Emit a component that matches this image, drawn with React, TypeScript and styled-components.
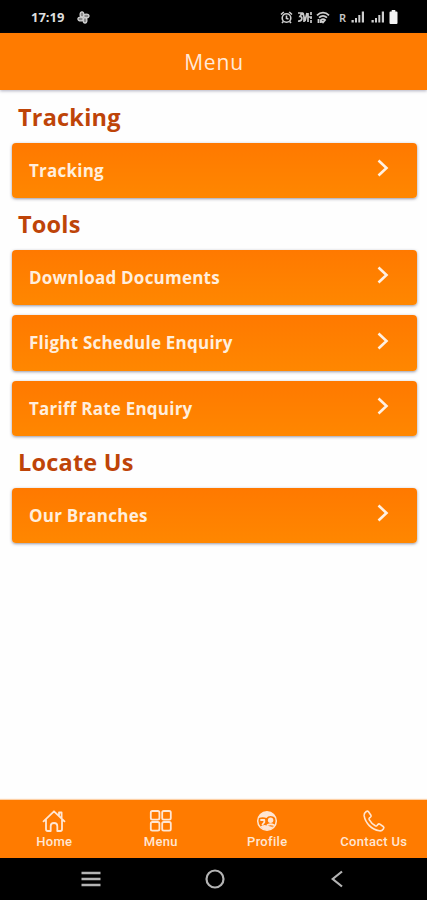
import React from "react";
import styled, { createGlobalStyle } from "styled-components";

const GlobalStyle = createGlobalStyle`
  * { box-sizing: border-box; }
  body { margin: 0; background: #fefefe; }
`;

const Screen = styled.div`
  display: flex;
  flex-direction: column;
  width: 100%;
  height: 900px;
  overflow: hidden;
  background: #fefefe;
  font-family: "Open Sans", sans-serif;
`;

const StatusBar = styled.div`
  display: flex;
  justify-content: space-between;
  align-items: center;
  height: 33px;
  padding: 1px 29px 0 31px;
  background: #000;
  color: #dedede;
`;

const StatusGroup = styled.div<{ $gap: number }>`
  display: flex;
  align-items: center;
  gap: ${(p) => p.$gap}px;
`;

const Clock = styled.span`
  font: 700 13px/16px "Noto Sans", sans-serif;
  letter-spacing: 0;
`;

const TopBar = styled.header`
  display: flex;
  align-items: center;
  justify-content: center;
  height: 57px;
  flex: none;
  padding-left: 1px;
  background: #ff7b00;
  box-shadow: 0 1px 3px rgba(60, 60, 100, 0.4);
  z-index: 1;
`;

const Title = styled.h1`
  margin: 0;
  color: #ffeadb;
  font-size: 21px;
  font-weight: 500;
  letter-spacing: 0.8px;
`;

const Content = styled.main`
  flex: 1;
  padding: 1px 10px 0 11.5px;
`;

const Heading = styled.h2`
  margin: 0;
  height: 51.5px;
  padding-left: 6.5px;
  color: #be4408;
  font-size: 23.5px;
  font-weight: 700;
  line-height: 52px;
  letter-spacing: 0.2px;
`;

const CardList = styled.div`
  display: flex;
  flex-direction: column;
  gap: 10px;
`;

const Card = styled.div`
  display: flex;
  align-items: center;
  justify-content: space-between;
  height: 55.5px;
  padding: 0 28px 0 17.5px;
  border-radius: 4px;
  background: linear-gradient(#ff7900, #ff8700);
  box-shadow: 0 1px 3px rgba(50, 50, 80, 0.5);
  svg { margin-top: -4px; }
`;

const CardLabel = styled.span`
  color: #ffeedd;
  font-size: 17px;
  font-weight: 700;
  letter-spacing: 0.23px;
`;

const TabBar = styled.nav`
  display: grid;
  grid-template-columns: repeat(4, 1fr);
  height: 58px;
  flex: none;
  padding-left: 1px;
  background: #ff7b00;
  box-shadow: 0 -1px 1px rgba(255, 123, 0, 0.35);
`;

const Tab = styled.div`
  display: flex;
  flex-direction: column;
  align-items: center;
  padding-top: 9px;
  color: #ffe6d3;
`;

const TabLabel = styled.span`
  font: 500 13px/15px Roboto, sans-serif;
  letter-spacing: 0.3px;
  margin-top: 1px;
  white-space: nowrap;
`;

const SystemBar = styled.div`
  display: flex;
  align-items: center;
  justify-content: space-between;
  height: 42px;
  flex: none;
  padding: 0 84px 0 81px;
  background: #000;
`;

const Chevron = () => (
  <svg width="12" height="18" viewBox="0 0 12 18" fill="none" stroke="#fff0e2" strokeWidth="2.6">
    <path d="M1.500 1.500 9.500 9l-8 7.500" />
  </svg>
);

const FanIcon = () => (
  <svg width="13" height="13" viewBox="0 0 13 13" fill="#888" stroke="#d0d0d0" strokeWidth="1.300">
    <ellipse cx="5" cy="3.500" rx="1.900" ry="2.700" />
    <ellipse cx="9.300" cy="5" rx="2.700" ry="1.900" />
    <ellipse cx="8" cy="9.300" rx="1.900" ry="2.700" />
    <ellipse cx="3.600" cy="8" rx="2.700" ry="1.900" />
  </svg>
);

const AlarmIcon = () => (
  <svg width="13" height="13" viewBox="0 0 13 13" fill="none" stroke="#cfcfcf" strokeWidth="1.600">
    <circle cx="6.500" cy="7" r="4.300" />
    <path d="M1 3.500 3.800 1M12 3.500 9.200 1M6.500 4.500v3l2 .6M3.300 10.500 2 12M9.700 10.500 11 12" />
  </svg>
);

const NetworkIcon = () => (
  <svg width="16" height="13" viewBox="0 0 16 13" fill="none" stroke="#c8c8c8" strokeWidth="1.700">
    <path d="M1 2h4L3 5.500c3 0 2.500 5 -2 4.500M6 2l2 8 2-8M7 6v5M11 2v9M14 1v3M14 6v2M14 9v3M11 6h4" />
  </svg>
);

const WifiIcon = () => (
  <svg width="14" height="13" viewBox="0 0 14 13" fill="none" stroke="#cfcfcf" strokeWidth="1.800">
    <path d="M1 4.300C4.500.8 9.500.8 13 4.300M3 6.700c2.500-2.300 5.500-2.300 8 0M5 9c1.500-1.200 2.800-1.200 4 0L7 11.300zM2.500 8v4M4.800 9v3" />
  </svg>
);

const SignalIcon = () => (
  <svg width="14" height="12" viewBox="0 0 14 12" fill="#cecece">
    <path d="M.5 9h2.300v2.500H.5zM4 7h2v4.500H4zM7.300 4h2v7.500h-2zM10.800.5H13v11h-2.200z" />
  </svg>
);

const BatteryIcon = () => (
  <svg width="9" height="14" viewBox="0 0 9 14" fill="#f4f4f4">
    <path d="M2.700 0h3.600v1.500h1.200q1 0 1 1V13q0 1-1 1h-6q-1 0-1-1V2.500q0-1 1-1h1.200z" />
  </svg>
);

const Roaming = styled.span`
  font: 600 11px/14px "Noto Sans", sans-serif;
  color: #c5c5c5;
  padding: 1px 1px 0 5px;
`;

const SignalPair = styled.span`
  display: flex;
  gap: 6px;
  padding-right: 1px;
`;

const IconFrame = styled.svg`
  width: 24px;
  height: 24px;
  fill: none;
  stroke: currentColor;
  stroke-width: 1.8;
  stroke-linejoin: round;
  stroke-linecap: round;
`;

const HomeIcon = () => (
  <IconFrame viewBox="0 0 24 24">
    <path d="M1.500 12.300 12 2.300l10.500 10M17 6.800V3.500h2.600v5.800M4 10.300v10q0 1.700 1.700 1.700h3V17q0-3 3.300-3t3.300 3v5h3q1.700 0 1.700-1.700v-10" />
  </IconFrame>
);

const GridIcon = () => (
  <IconFrame viewBox="0 0 24 24">
    <rect x="1.800" y="2" width="8.600" height="8.600" rx="1.600" />
    <rect x="13.200" y="2" width="8.600" height="8.600" rx="1.600" />
    <rect x="1.800" y="13" width="8.600" height="8.600" rx="1.600" />
    <rect x="13.200" y="13" width="8.600" height="8.600" rx="1.600" />
  </IconFrame>
);

/* Two heads inside a ring: a small one looking left and a round one on the right. */
const ProfileIcon = () => (
  <IconFrame viewBox="0 0 24 24">
    <circle cx="12" cy="12" r="9.300" strokeWidth="1.500" />
    <path d="M3.500 9Q5.500 2.800 12 2.800T20.500 9q-2.200-2-5-2t-4 2Q8 7.500 3.500 9z" fill="currentColor" stroke="none" />
    <path d="M5.500 17.500Q8.500 15 12 16.500t6.500 1Q16 21 12 21t-6.500-3.500z" fill="currentColor" stroke="none" />
    <circle cx="15.600" cy="11.300" r="2.700" fill="currentColor" stroke="none" />
    <path d="M6 11h3.300v2.200L7.500 15.500M12.500 16q3.200-1.500 6.300 0" />
  </IconFrame>
);

const PhoneIcon = () => (
  <IconFrame viewBox="0 0 24 24">
    <path d="M4.300 2.500q1.300-.9 2.200.3l2.400 3.400q.6 1-.3 1.800L7.300 9.100q-.6.600-.1 1.500 2.200 3.900 6.100 6.200.9.500 1.500-.1l1.200-1.300q.8-.9 1.800-.3l3.400 2.400q1.200.9.300 2.200-1.900 2.600-4.100 2.100Q11.500 20.800 7.300 16.600T2.100 6.700Q1.800 4.300 4.300 2.500z" strokeWidth="1.600" />
  </IconFrame>
);

const RecentsIcon = () => (
  <svg width="20" height="16" viewBox="0 0 20 16" stroke="#b4b4b4" strokeWidth="2.300">
    <path d="M.5 2h19M.5 8h19M.5 14h19" />
  </svg>
);

const HomeRing = styled.svg`
  width: 20px;
  height: 20px;
  margin-right: 3px;
  fill: none;
  stroke: #b4b4b4;
  stroke-width: 2.2;
`;

const BackIcon = () => (
  <svg width="12" height="18" viewBox="0 0 12 18" fill="none" stroke="#b4b4b4" strokeWidth="2.200">
    <path d="M11 1.500 1.700 9l9.300 7.500" />
  </svg>
);

const sections = [
  { title: "Tracking", items: ["Tracking"] },
  { title: "Tools", items: ["Download Documents", "Flight Schedule Enquiry", "Tariff Rate Enquiry"] },
  { title: "Locate Us", items: ["Our Branches"] },
];

const tabs = [
  { label: "Home", Icon: HomeIcon },
  { label: "Menu", Icon: GridIcon },
  { label: "Profile", Icon: ProfileIcon },
  { label: "Contact Us", Icon: PhoneIcon },
];

export default function App() {
  return (
    <Screen>
      <GlobalStyle />
      <StatusBar>
        <StatusGroup $gap={13}>
          <Clock>17:19</Clock>
          <FanIcon />
        </StatusGroup>
        <StatusGroup $gap={3.5}>
          <AlarmIcon />
          <NetworkIcon />
          <WifiIcon />
          <Roaming>R</Roaming>
          <SignalPair>
            <SignalIcon />
            <SignalIcon />
          </SignalPair>
          <BatteryIcon />
        </StatusGroup>
      </StatusBar>
      <TopBar>
        <Title>Menu</Title>
      </TopBar>
      <Content>
        {sections.map((section) => (
          <section key={section.title}>
            <Heading>{section.title}</Heading>
            <CardList>
              {section.items.map((item) => (
                <Card key={item}>
                  <CardLabel>{item}</CardLabel>
                  <Chevron />
                </Card>
              ))}
            </CardList>
          </section>
        ))}
      </Content>
      <TabBar>
        {tabs.map(({ label, Icon }) => (
          <Tab key={label}>
            <Icon />
            <TabLabel>{label}</TabLabel>
          </Tab>
        ))}
      </TabBar>
      <SystemBar>
        <RecentsIcon />
        <HomeRing viewBox="0 0 20 20">
          <circle cx="10" cy="10" r="8.500" />
        </HomeRing>
        <BackIcon />
      </SystemBar>
    </Screen>
  );
}
